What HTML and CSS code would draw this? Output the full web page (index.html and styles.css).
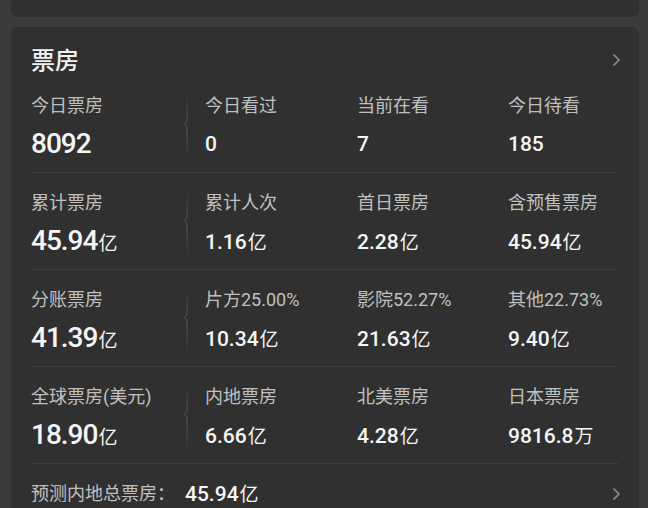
FILE: index.html
```html
<!DOCTYPE html>
<html lang="zh-CN">
<head>
    <meta charset="UTF-8">
    <meta name="viewport" content="width=device-width, initial-scale=1.0">
    <title>票房</title>
    <link rel="stylesheet" href="styles.css">
</head>
<body>
    <svg class="defs" width="0" height="0">
        <defs>
            <linearGradient id="fade" x1="0" y1="0" x2="0" y2="62" gradientUnits="userSpaceOnUse">
                <stop offset="0" stop-color="#555" stop-opacity="0"/>
                <stop offset="0.3" stop-color="#555" stop-opacity="1"/>
                <stop offset="0.7" stop-color="#555" stop-opacity="1"/>
                <stop offset="1" stop-color="#555" stop-opacity="0"/>
            </linearGradient>
        </defs>
    </svg>

    <div class="page">
        <div class="top-card"></div>

        <section class="card">
            <div class="card-head">
                <h2>票房</h2>
                <svg class="chevron" viewBox="0 0 10 16"><path d="M2.5 2.5 L8 8 L2.5 13.5"/></svg>
            </div>

            <div class="row">
                <div class="cell first">
                    <div class="stat">
                        <div class="label">今日票房</div>
                        <div class="value big">8092</div>
                    </div>
                    <svg class="divider" viewBox="0 0 8 62"><path d="M6 0 V24 C6 26.2 3.6 26.4 3.6 27.5 C3.6 28.6 6 28.8 6 31 V62"/></svg>
                </div>
                <div class="cell">
                    <div class="label">今日看过</div>
                    <div class="value">0</div>
                </div>
                <div class="cell">
                    <div class="label">当前在看</div>
                    <div class="value">7</div>
                </div>
                <div class="cell">
                    <div class="label">今日待看</div>
                    <div class="value">185</div>
                </div>
            </div>

            <div class="row">
                <div class="cell first">
                    <div class="stat">
                        <div class="label">累计票房</div>
                        <div class="value big">45.94<span class="unit">亿</span></div>
                    </div>
                    <svg class="divider" viewBox="0 0 8 62"><path d="M6 0 V24 C6 26.2 3.6 26.4 3.6 27.5 C3.6 28.6 6 28.8 6 31 V62"/></svg>
                </div>
                <div class="cell">
                    <div class="label">累计人次</div>
                    <div class="value">1.16<span class="unit">亿</span></div>
                </div>
                <div class="cell">
                    <div class="label">首日票房</div>
                    <div class="value">2.28<span class="unit">亿</span></div>
                </div>
                <div class="cell">
                    <div class="label">含预售票房</div>
                    <div class="value">45.94<span class="unit">亿</span></div>
                </div>
            </div>

            <div class="row">
                <div class="cell first">
                    <div class="stat">
                        <div class="label">分账票房</div>
                        <div class="value big">41.39<span class="unit">亿</span></div>
                    </div>
                    <svg class="divider" viewBox="0 0 8 62"><path d="M6 0 V24 C6 26.2 3.6 26.4 3.6 27.5 C3.6 28.6 6 28.8 6 31 V62"/></svg>
                </div>
                <div class="cell">
                    <div class="label">片方25.00%</div>
                    <div class="value">10.34<span class="unit">亿</span></div>
                </div>
                <div class="cell">
                    <div class="label">影院52.27%</div>
                    <div class="value">21.63<span class="unit">亿</span></div>
                </div>
                <div class="cell">
                    <div class="label">其他22.73%</div>
                    <div class="value">9.40<span class="unit">亿</span></div>
                </div>
            </div>

            <div class="row">
                <div class="cell first">
                    <div class="stat">
                        <div class="label">全球票房(美元)</div>
                        <div class="value big">18.90<span class="unit">亿</span></div>
                    </div>
                    <svg class="divider" viewBox="0 0 8 62"><path d="M6 0 V24 C6 26.2 3.6 26.4 3.6 27.5 C3.6 28.6 6 28.8 6 31 V62"/></svg>
                </div>
                <div class="cell">
                    <div class="label">内地票房</div>
                    <div class="value">6.66<span class="unit">亿</span></div>
                </div>
                <div class="cell">
                    <div class="label">北美票房</div>
                    <div class="value">4.28<span class="unit">亿</span></div>
                </div>
                <div class="cell">
                    <div class="label">日本票房</div>
                    <div class="value">9816.8<span class="unit">万</span></div>
                </div>
            </div>

            <div class="forecast">
                <span class="label">预测内地总票房：</span>
                <span class="value">45.94<span class="unit">亿</span></span>
                <svg class="chevron" viewBox="0 0 10 16"><path d="M2.5 2.5 L8 8 L2.5 13.5"/></svg>
            </div>
        </section>
    </div>
</body>
</html>
```

FILE: styles.css
```css
body {
    margin: 0;
    background: #3b3b3b;
    font-family: Roboto, "Noto Sans CJK SC", sans-serif;
    height: 508px;
    overflow: hidden;
}

.defs {
    display: block;
    width: 0;
    height: 0;
}

.page {
    padding: 0 9px 0 11px;
}

.top-card {
    height: 17px;
    background: #303030;
    border-radius: 0 0 7px 7px;
}

.card {
    margin-top: 10px;
    background: #303030;
    border-radius: 8px;
    padding: 17px 21px 30px 20px;
}

.card-head {
    display: flex;
    justify-content: space-between;
    align-items: flex-start;
    height: 32px;
}

.card-head h2 {
    margin: 0;
    font-family: "Noto Sans CJK SC", sans-serif;
    font-size: 24px;
    font-weight: 500;
    line-height: 30px;
    color: #f2f2f2;
}

.chevron {
    width: 10px;
    height: 16px;
    margin-right: -3px;
    fill: none;
    stroke: #8d8d8d;
    stroke-width: 1.6;
}

.card-head .chevron {
    margin-top: 8px;
}

.row {
    display: grid;
    grid-template-columns: 174px 152px 151px 1fr;
    height: 96px;
    border-bottom: 1px solid #3e3e3e;
}

.cell {
    padding-top: 18px;
}

.cell.first {
    display: flex;
    justify-content: space-between;
    padding-top: 0;
}

.stat {
    padding-top: 18px;
}

.divider {
    width: 8px;
    height: 62px;
    margin: 20px 16px 0 0;
    fill: none;
    stroke: url(#fade);
    stroke-width: 1;
}

.label {
    font-size: 18px;
    line-height: 24px;
    color: #c0c0c0;
    white-space: nowrap;
}

.value {
    margin-top: 9px;
    font-size: 21px;
    font-weight: 500;
    line-height: 34px;
    color: #f5f5f5;
    white-space: nowrap;
}

.value.big {
    font-size: 28px;
    letter-spacing: -1px;
}

.unit {
    font-family: "Noto Sans CJK SC", sans-serif;
    font-size: 19px;
    font-weight: 400;
    letter-spacing: 0;
    margin-left: 1px;
}

.forecast {
    display: flex;
    align-items: center;
    padding-top: 17px;
}

.forecast .value {
    margin: 0 0 0 10px;
    line-height: 24px;
}

.forecast .chevron {
    margin-left: auto;
}
```
